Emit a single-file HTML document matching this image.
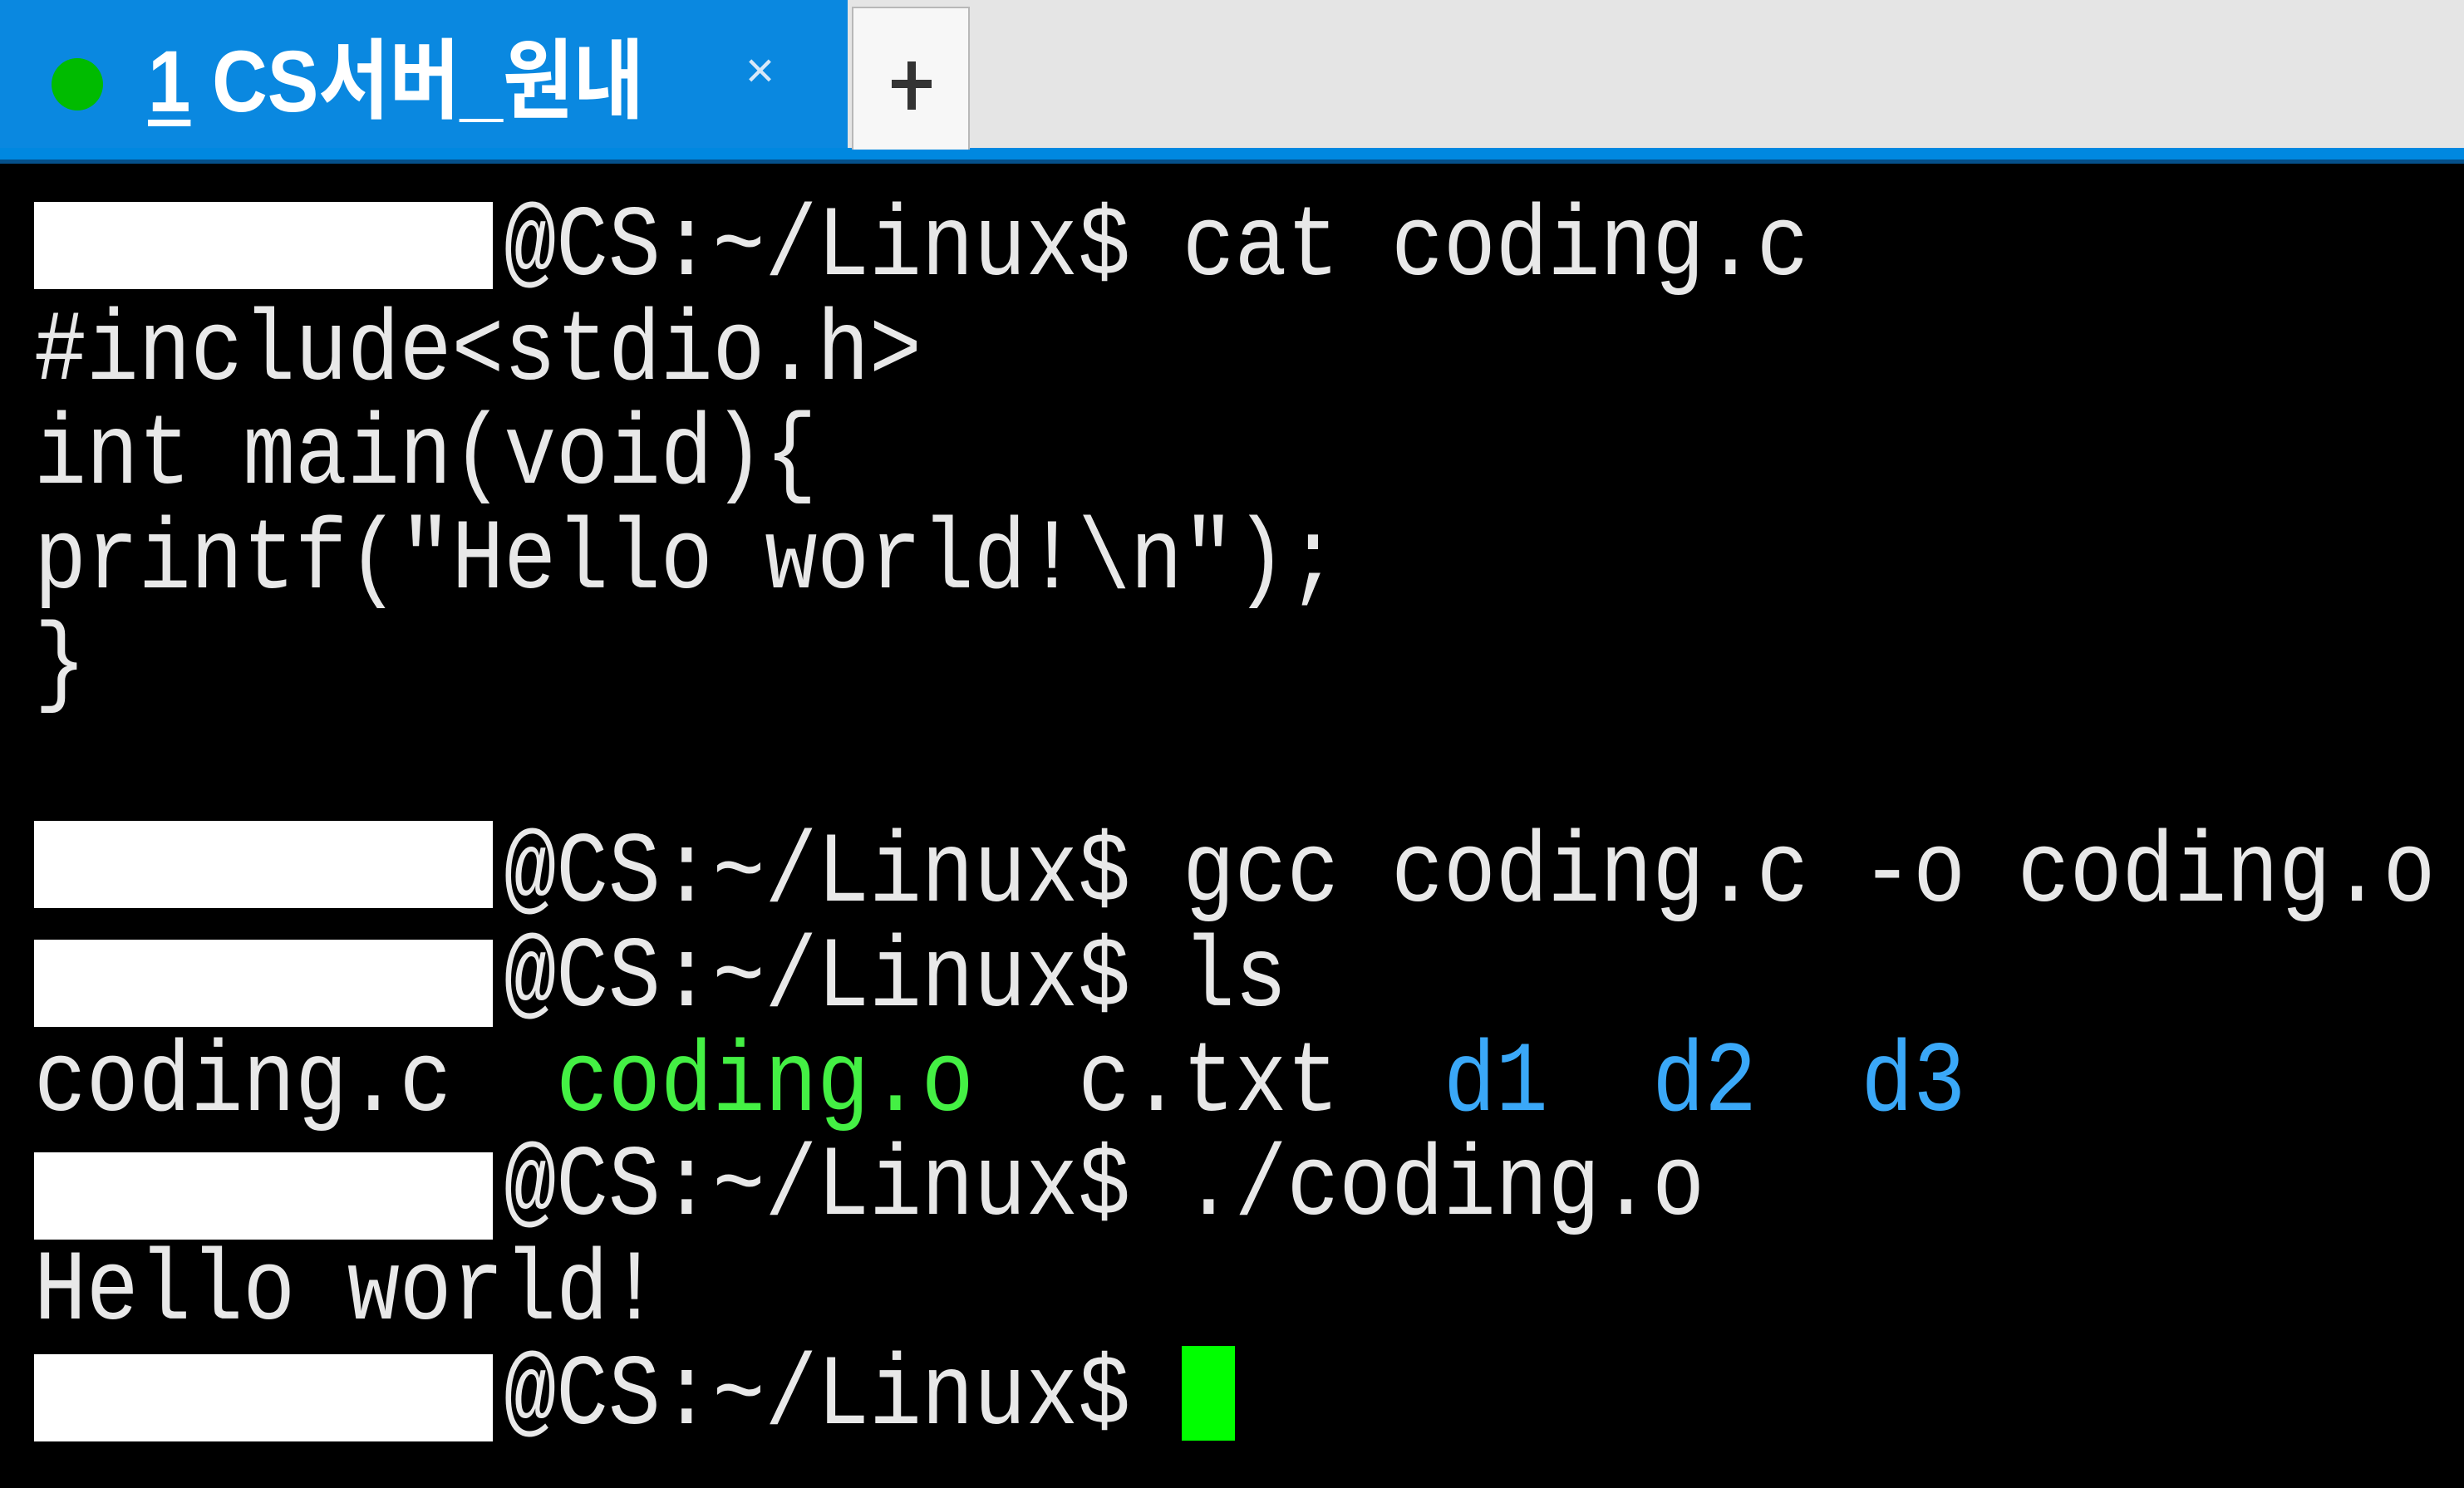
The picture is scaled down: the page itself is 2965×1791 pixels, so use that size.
<!DOCTYPE html>
<html><head><meta charset="utf-8"><style>
html,body{margin:0;padding:0;width:2965px;height:1791px;background:#000;overflow:hidden;position:relative}
.tabbar{position:absolute;left:0;top:0;width:2965px;height:178px;background:#e5e5e5}
.tab{position:absolute;left:0;top:0;width:1020px;height:192px;background:#0a88e0}
.stripe{position:absolute;left:0;top:178px;width:2965px;height:16px;background:#0088e0}
.stripe2{position:absolute;left:0;top:192px;width:2965px;height:5px;background:#05508a}
.dot{position:absolute;left:62px;top:70px;width:62px;height:63px;border-radius:50%;background:#00bb00}
.title{position:absolute;left:178px;top:36px;font:bold 105px/1.2 "Liberation Sans","Noto Sans CJK KR",sans-serif;color:#fff;transform:scaleX(0.88);transform-origin:0 0;white-space:nowrap}
.title u{text-decoration-thickness:8px;text-underline-offset:10px}
.x{position:absolute;left:897px;top:55px;font:60px/1 "Liberation Sans",sans-serif;color:#d8e8f8}
.plus{position:absolute;left:1025px;top:8px;width:142px;height:172px;background:#f7f7f7;border:2px solid #b8b8b8;border-bottom:none;box-sizing:border-box}
.plus:before{content:"";position:absolute;left:46px;top:86px;width:48px;height:10px;background:#333}
.plus:after{content:"";position:absolute;left:65px;top:64px;width:10px;height:58px;background:#333}
.l{position:absolute;left:41px;height:105px;font:105px/105px "Liberation Mono",monospace;letter-spacing:-0.2px;color:#e8e8e8;white-space:pre;transform:scaleY(1.15);transform-origin:0 81px}
.w{position:absolute;left:41px;width:552px;height:105px;background:#fff}
.g{color:#44f044}.b{color:#3aa8f8}
.cur{position:absolute;left:1422px;top:1620px;width:64px;height:114px;background:#00ff00}
</style></head><body>
<div class="tabbar"></div>
<div class="tab"></div>
<div class="stripe"></div>
<div class="stripe2"></div>
<div class="dot"></div>
<div class="title"><u>1</u> CS서버_원내</div>
<div class="x">×</div>
<div class="plus"></div>

<div class="l" style="top:250px">         @CS:~/Linux$ cat coding.c</div>
<div class="l" style="top:376px">#include&lt;stdio.h&gt;</div>
<div class="l" style="top:501px">int main(void){</div>
<div class="l" style="top:627px">printf("Hello world!\n");</div>
<div class="l" style="top:753px">}</div>
<div class="l" style="top:1004px">         @CS:~/Linux$ gcc coding.c -o coding.o</div>
<div class="l" style="top:1130px">         @CS:~/Linux$ ls</div>
<div class="l" style="top:1256px">coding.c  <span class="g">coding.o</span>  c.txt  <span class="b">d1</span>  <span class="b">d2</span>  <span class="b">d3</span></div>
<div class="l" style="top:1381px">         @CS:~/Linux$ ./coding.o</div>
<div class="l" style="top:1507px">Hello world!</div>
<div class="l" style="top:1633px">         @CS:~/Linux$ </div>

<div class="w" style="top:243px"></div>
<div class="w" style="top:988px"></div>
<div class="w" style="top:1131px"></div>
<div class="w" style="top:1387px"></div>
<div class="w" style="top:1630px"></div>
<div class="cur"></div>
</body></html>
